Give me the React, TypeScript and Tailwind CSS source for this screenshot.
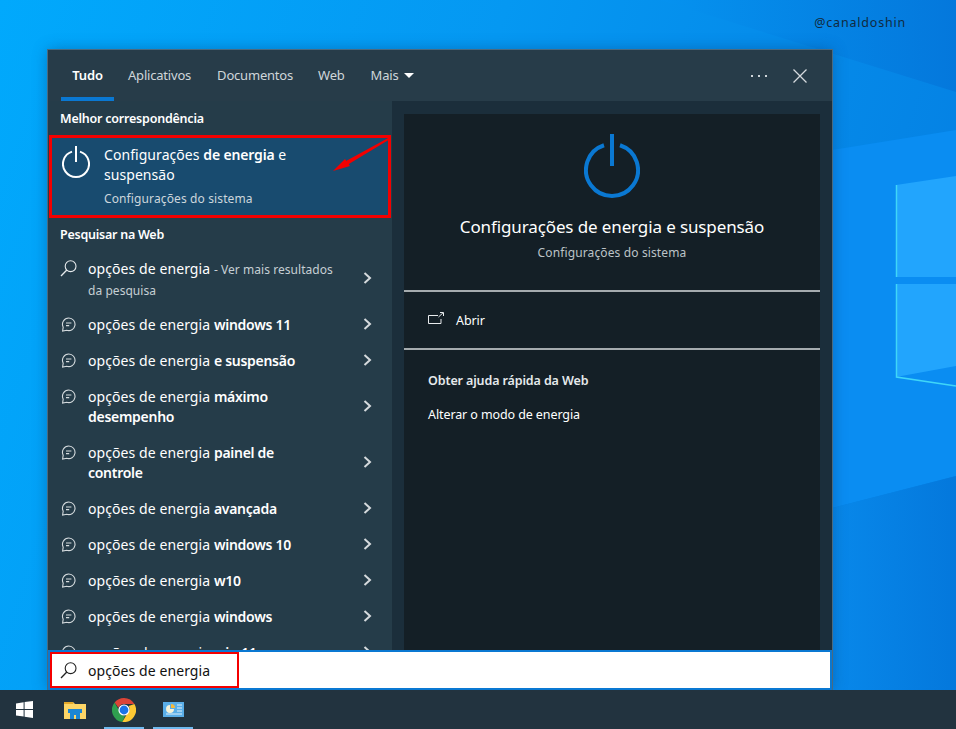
const font = "font-['Noto_Sans','Open_Sans',sans-serif]";

const Wallpaper = () => (
  <svg className="absolute inset-0" width="956" height="729" viewBox="0 0 956 729">
    <defs>
      <linearGradient id="sky" x1="0" y1="0" x2="1" y2="0.25">
        <stop offset="0" stopColor="#01a9fc" />
        <stop offset="0.5" stopColor="#0598f2" />
        <stop offset="1" stopColor="#0582e4" />
      </linearGradient>
      <linearGradient id="beam" x1="0" y1="0" x2="1" y2="0">
        <stop offset="0" stopColor="#0592ef" />
        <stop offset="1" stopColor="#0478dc" />
      </linearGradient>
      <linearGradient id="floor" x1="0" y1="0" x2="1" y2="0">
        <stop offset="0" stopColor="#0888ea" />
        <stop offset="1" stopColor="#0478dc" />
      </linearGradient>
    </defs>
    <rect width="956" height="729" fill="url(#sky)" />
    <polygon points="660,0 956,92 956,0" fill="url(#beam)" />
    <polygon points="832,150 956,130 956,476 832,508" fill="#0a8df2" />
    <polygon points="832,508 956,476 956,729 832,729" fill="url(#floor)" />
    <polygon points="896,185 956,176 956,277 896,277" fill="#22a5fd" />
    <polygon points="896,284 956,284 956,366 896,377" fill="#22a5fd" />
    <path d="M896.5 185V277M896.5 284V377L956 386" stroke="#3fd6f8" strokeWidth="1.5" fill="none" />
  </svg>
);

const PowerIcon = ({ color, width, height, stroke }: { color: string; width: number; height: number; stroke: number }) => (
  <svg width={width} height={height} viewBox="0 0 56 64" fill="none" stroke={color} strokeWidth={stroke}>
    <path d="M20 11.26A26 26 0 1 0 36 11.26" />
    <path d="M28 0V32" />
  </svg>
);

const SearchIcon = ({ color }: { color: string }) => (
  <svg width="17" height="17" viewBox="0 0 17 17" fill="none" stroke={color} strokeWidth="1.1">
    <circle cx="10.6" cy="6.2" r="5.4" />
    <path d="M6.8 10L1 16" strokeWidth="1.3" />
  </svg>
);

const ChatIcon = () => (
  <svg width="15" height="15" viewBox="0 0 15 15" fill="none" stroke="#d5dbde" strokeWidth="1.1">
    <path d="M7.8 1A6.3 6.3 0 1 1 5.8 13.3L1.6 14L2.2 10.2A6.3 6.3 0 0 1 7.8 1Z" />
    <path d="M5 6H10.4M5 8.6H8.2" />
  </svg>
);

const Chevron = () => (
  <svg className="mb-[2px] ml-auto shrink-0" width="9" height="12" viewBox="0 0 9 12" fill="none" stroke="#d5dadd" strokeWidth="2">
    <path d="M1.5 1L7 6L1.5 11" />
  </svg>
);

type Suggestion = { bold: string; rowHeight: string };

const suggestions: Suggestion[] = [
  { bold: "windows 11", rowHeight: "h-9" },
  { bold: "e suspensão", rowHeight: "h-9" },
  { bold: "máximo desempenho", rowHeight: "h-[56px]" },
  { bold: "painel de controle", rowHeight: "h-[56px]" },
  { bold: "avançada", rowHeight: "h-9" },
  { bold: "windows 10", rowHeight: "h-9" },
  { bold: "w10", rowHeight: "h-9" },
  { bold: "windows", rowHeight: "h-9" },
  { bold: "win 11", rowHeight: "h-9" },
];

const SuggestionRow = ({ bold, rowHeight }: Suggestion) => (
  <div className={`${rowHeight} flex items-center shrink-0 pl-[13px] pr-[20px]`}>
    <div className="self-start mt-[10px] w-[27px] shrink-0">
      <ChatIcon />
    </div>
    <p className="w-[230px] text-[14px] leading-[20px] tracking-[0.08px] text-white">
      opções de energia <span className="font-semibold tracking-[-0.28px]">{bold}</span>
    </p>
    <Chevron />
  </div>
);

const Tabs = () => (
  <div className="flex h-[51px] items-stretch bg-[#273c49] pl-[13px] pr-[25px] text-[13px] tracking-[-0.2px] text-[#cfd6da]">
    <div className="relative flex w-[53px] items-center justify-center font-semibold text-white">
      Tudo
      <span className="absolute bottom-0 left-0 h-[4px] w-[53px] bg-[#0a78d2]" />
    </div>
    <div className="ml-[14px] flex items-center">Aplicativos</div>
    <div className="ml-[26px] flex items-center">Documentos</div>
    <div className="ml-[25px] flex items-center">Web</div>
    <div className="ml-[26px] flex items-center gap-[6px]">
      Mais
      <span className="h-0 w-0 border-x-[5px] border-t-[5px] border-x-transparent border-t-white" />
    </div>
    <div className="ml-auto flex items-center gap-[26px]">
      <span className="flex gap-[5px]">
        <i className="size-[2px] bg-[#cfd6da]" />
        <i className="size-[2px] bg-[#cfd6da]" />
        <i className="size-[2px] bg-[#cfd6da]" />
      </span>
      <svg width="14" height="14" viewBox="0 0 14 14" stroke="#d5dadd" strokeWidth="1.3">
        <path d="M0.5 0.5L13.5 13.5M13.5 0.5L0.5 13.5" />
      </svg>
    </div>
  </div>
);

const BestMatch = () => (
  <div className="relative mx-[1px] flex h-[83px] border-[3px] border-[#f40000] bg-[#184b6f]">
    <div className="ml-[10px] mt-[8px] w-[42px] shrink-0">
      <PowerIcon color="white" width={28} height={32} stroke={4} />
    </div>
    <div className="pt-[7px] text-white">
      <p className="w-[210px] text-[14px] leading-[20px] tracking-[0.06px]">
        Configurações <span className="font-semibold tracking-[-0.15px]">de energia</span> e suspensão
      </p>
      <p className="mt-[6px] text-[12px] leading-[16px] tracking-[0.12px] text-[#ccd6dc]">Configurações do sistema</p>
    </div>
    {/* red arrow drawn on top of the result */}
    <svg className="absolute left-[278px] top-[-3px]" width="62" height="40" viewBox="0 0 62 40">
      <polygon points="60,2 61,3.5 18,29.5 16,26" fill="#f40000" />
      <polygon points="3,36 15,24 20,31" fill="#f40000" />
    </svg>
  </div>
);

const LeftPane = () => (
  <div className="flex h-[549px] w-[344px] shrink-0 flex-col overflow-hidden bg-[#253c49]">
    <h3 className="ml-[12px] mt-[8px] h-[19px] text-[12.5px] font-semibold leading-[19px] tracking-[-0.22px] text-white">
      Melhor correspondência
    </h3>
    <div className="mt-[7px]">
      <BestMatch />
    </div>
    <h3 className="ml-[12px] mt-[7px] h-[19px] text-[12.5px] font-semibold leading-[19px] tracking-[-0.25px] text-white">
      Pesquisar na Web
    </h3>
    <div className="mt-[7px] flex h-[56px] shrink-0 items-center pl-[12px] pr-[20px]">
      <div className="mb-[22px] w-[28px] shrink-0">
        <SearchIcon color="#e6eaec" />
      </div>
      <p className="w-[248px] pt-[1px] text-[14px] leading-[20px] tracking-[0.08px] text-white">
        opções de energia <span className="text-[12px] tracking-[0.05px] text-[#c6cfd4]">- Ver mais resultados da pesquisa</span>
      </p>
      <Chevron />
    </div>
    {suggestions.map((s) => (
      <SuggestionRow key={s.bold} {...s} />
    ))}
  </div>
);

const RightPane = () => (
  <div className="flex h-[549px] flex-1 flex-col bg-[#1b2e3b] px-[12px] pt-[13px]">
    <div className="flex-1 bg-[#141f26] text-white">
      <div className="flex h-[178px] flex-col items-center border-b-2 border-[#a5abae] pt-[20px]">
        <PowerIcon color="#0a78d2" width={56} height={64} stroke={4} />
        <h2 className="mt-[16px] text-[17px] leading-[26px] tracking-[-0.12px]">Configurações de energia e suspensão</h2>
        <p className="mt-[5px] text-[12px] leading-[16px] tracking-[0.13px] text-[#bcc3c7]">Configurações do sistema</p>
      </div>
      <div className="flex h-[58px] items-center border-b-2 border-[#a5abae] pl-[24px] text-[12.5px] tracking-[-0.1px]">
        <svg className="mb-[4px]" width="16" height="12" viewBox="0 0 16 12" fill="none" stroke="#e8ebed" strokeWidth="1">
          <path d="M10 3.5H0.5V11.5H13V7" />
          <path d="M10.5 5L15 0.8M12 0.5H15.5V4" />
        </svg>
        <span className="ml-[12px] pt-[2px]">Abrir</span>
      </div>
      <div className="pl-[24px] pt-[21px] text-[12.5px] leading-[19px] tracking-[-0.1px]">
        <p className="font-semibold tracking-[-0.12px] text-[#e6eaec]">Obter ajuda rápida da Web</p>
        <p className="mt-[15px]">Alterar o modo de energia</p>
      </div>
    </div>
  </div>
);

const SearchBar = () => (
  <div className="flex h-[40px] border-[2px] border-[#0a78d2] bg-white">
    <div className="flex h-[36px] w-[189px] items-center border-[2px] border-[#f40000] pl-[8px]">
      <div className="w-[28px]">
        <SearchIcon color="#222" />
      </div>
      <span className="text-[14px] tracking-[0.08px] text-[#111]">opções de energia</span>
    </div>
  </div>
);

const Taskbar = () => (
  <div className="flex h-[39px] items-center bg-[#22333f] pl-[16px]">
    <svg width="17" height="17" viewBox="0 0 17 17" fill="white">
      <polygon points="0,2.4 7.6,1.3 7.6,8 0,8" />
      <polygon points="8.6,1.1 17,0 17,8 8.6,8" />
      <polygon points="0,9 7.6,9 7.6,15.6 0,14.6" />
      <polygon points="8.6,9 17,9 17,17 8.6,15.8" />
    </svg>
    <div className="ml-[22px] flex h-full w-[40px] items-center justify-center">
      <svg width="22" height="18" viewBox="0 0 22 18">
        <path d="M0 1H9L11 3H22V18H0Z" fill="#fdd667" />
        <path d="M0 1H9L9.5 3H0Z" fill="#e4a82a" />
        <path d="M4 8H18V12H16V18H12V14H10V18H6V12H4Z" fill="#1c86d4" />
      </svg>
    </div>
    <div className="relative ml-[9px] flex h-full w-[40px] items-center justify-center">
      <svg width="24" height="24" viewBox="0 0 24 24">
        <path d="M12 0A12 12 0 0 1 22.4 6H12A6 6 0 0 0 6.4 9.8L2.6 4.5A12 12 0 0 1 12 0Z" fill="#db4437" />
        <path d="M2.6 4.5L7.8 13.8A5.5 5.5 0 0 0 13 17.9L10.3 23.9A12 12 0 0 1 2.6 4.5Z" fill="#2f9e4f" />
        <path d="M22.4 6A12 12 0 0 1 10.3 23.9L15.6 15A5.5 5.5 0 0 0 16.6 8Z" fill="#fcc934" />
        <circle cx="12" cy="12" r="5.6" fill="white" />
        <circle cx="12" cy="12" r="4.4" fill="#1a73e8" />
      </svg>
      <span className="absolute bottom-0 left-0 h-[2px] w-full bg-[#6fb9ee]" />
    </div>
    <div className="relative ml-[9px] flex h-full w-[40px] items-center justify-center">
      <svg width="21" height="15" viewBox="0 0 21 15">
        <rect width="21" height="15" fill="#5aaee8" />
        <path d="M7 3A4 4 0 1 0 11 7H7Z" fill="#f6f2d8" />
        <path d="M8 2A4 4 0 0 1 12 6H8Z" fill="#f5b93e" />
        <path d="M14 3H19M14 6H19M14 9H19M3 12H19" stroke="#dff0fb" />
      </svg>
      <span className="absolute bottom-0 left-0 h-[2px] w-full bg-[#6fb9ee]" />
    </div>
  </div>
);

export default function App() {
  return (
    <div className={`relative h-[729px] w-[956px] overflow-hidden ${font}`}>
      <Wallpaper />
      <div className="relative flex h-full flex-col">
        <div className="flex h-[50px] justify-end pr-[50px] pt-[14px] text-[12.5px] leading-[17px] tracking-[0.8px] text-[#112a40]">
          @canaldoshin
        </div>
        <div className="ml-[48px] h-[640px] w-[784px] outline outline-1 outline-[#4a6a80] shadow-[0_0_14px_rgba(0,60,120,0.45)]">
          <Tabs />
          <div className="flex">
            <LeftPane />
            <RightPane />
          </div>
          <SearchBar />
        </div>
        <Taskbar />
      </div>
    </div>
  );
}
